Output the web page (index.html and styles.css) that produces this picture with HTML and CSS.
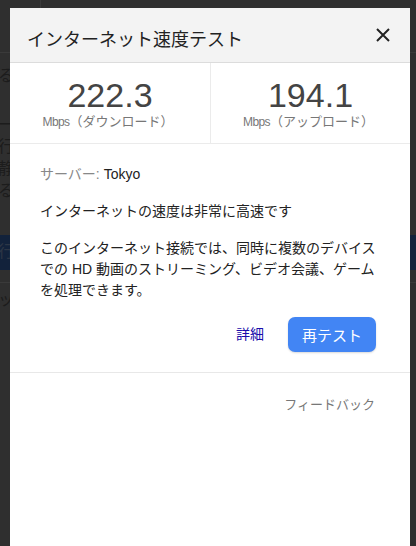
FILE: index.html
```
<!doctype html>

<html>
	<head>
		<meta charset="utf-8">
		<link rel="stylesheet" href="styles.css">
	</head>
	<body>
		<!-- the page behind the dialog, dimmed -->
		<div class="page">
			<div class="page-bar"><span class="page-tab"></span></div>
			<div class="page-line first">設定を確認する</div>
			<div class="page-block">
				<div class="page-line">サーバーー</div>
				<div class="page-line">テストを実行</div>
				<div class="page-line">接続が静</div>
				<div class="page-line">確認する</div>
			</div>
			<div class="page-button"><span class="page-line">テストを実行</span></div>
			<div class="page-rule"></div>
			<div class="page-line">フィードバッ</div>
		</div>

		<div class="overlay">
			<div class="dialog">
				<div class="dialog-head">
					<span class="dialog-title">インターネット速度テスト</span>
					<svg class="close" width="14" height="14" viewBox="0 0 14 14">
						<path d="M1 1L13 13M13 1L1 13" stroke="#222" stroke-width="2" fill="none"/>
					</svg>
				</div>

				<div class="stats">
					<div class="stat">
						<div class="stat-value">222.3</div>
						<div class="stat-label"><span class="unit">Mbps</span>（ダウンロード）</div>
					</div>
					<div class="stat">
						<div class="stat-value">194.1</div>
						<div class="stat-label"><span class="unit">Mbps</span>（アップロード）</div>
					</div>
				</div>

				<div class="result">
					<p class="server"><span class="muted">サーバー:</span> Tokyo</p>
					<p>インターネットの速度は非常に高速です</p>
					<p>このインターネット接続では、同時に複数のデバイスでの HD 動画のストリーミング、ビデオ会議、ゲームを処理できます。</p>
					<div class="actions">
						<a class="details" href="#">詳細</a>
						<button class="retest">再テスト</button>
					</div>
				</div>

				<div class="feedback">フィードバック</div>
			</div>
		</div>
	</body>
</html>
```

FILE: styles.css
```
body, html {
	margin: 0;
	padding: 0;
	height: 100%;
	overflow: hidden;
	background: #2f2f2f;
	font-family: "Liberation Sans", Arial, "Noto Sans CJK JP", sans-serif;
}

/* dimmed page */
.page {
	color: #1c1c1c;
	font-size: 16px;
}

.page-bar {
	height: 52px;
	border-bottom: 1px solid #3a3a3a;
}

.page-tab {
	display: block;
	width: 40px;
	height: 8px;
	border-right: 1px solid #3a3a3a;
}

.page-line {
	display: block;
	width: 14px;
	height: 22px;
	line-height: 22px;
	direction: rtl;
	white-space: nowrap;
	overflow: hidden;
}

.page-line.first {
	margin-top: 12px;
}

.page-block {
	margin-top: 27px;
}

.page-button {
	margin-top: 33px;
	height: 35px;
	padding-top: 6px;
	box-sizing: border-box;
	background: #12223b;
	color: #2c3646;
}

.page-rule {
	margin: 12px 0 6px;
	border-top: 1px solid #3a3a3a;
}

/* dialog */
.overlay {
	position: fixed;
	inset: 0;
	display: flex;
	padding: 8px 0 0 10px;
}

.dialog {
	width: 400px;
	background: #fff;
	display: flex;
	flex-direction: column;
}

.dialog-head {
	height: 55px;
	box-sizing: border-box;
	padding: 20px 20px 0 17px;
	background: #f3f3f3;
	border-bottom: 1px solid #dcdcdc;
	display: flex;
	align-items: flex-start;
	justify-content: space-between;
	flex-shrink: 0;
}

.dialog-title {
	font-size: 18px;
	line-height: 24px;
	color: #222;
}

.close {
	flex-shrink: 0;
}

.stats {
	display: grid;
	grid-template-columns: 200px 200px;
	border-bottom: 1px solid #ebebeb;
}

.stat {
	padding: 15px 0 14px;
	text-align: center;
}

.stat + .stat {
	border-left: 1px solid #ebebeb;
}

.stat-value {
	font-size: 34px;
	line-height: 34px;
	color: #444;
}

.stat-label {
	margin: 3px 4px 0 0;
	font-size: 13px;
	line-height: 13px;
	color: #777;
}

.unit {
	font-size: 12px;
	letter-spacing: -0.6px;
}

.result {
	padding: 20px 32px 20px 30px;
	font-size: 14px;
	line-height: 21px;
	color: #222;
}

.result p {
	margin: 0 0 16px;
}

.muted {
	color: #888;
}

.actions {
	display: flex;
	align-items: center;
	justify-content: flex-end;
	gap: 24px;
	margin-top: 16px;
	padding-right: 2px;
}

.details {
	color: #1a0dab;
	text-decoration: none;
}

.retest {
	width: 88px;
	height: 35px;
	border: none;
	border-radius: 7px;
	background: #4285f4;
	color: #fff;
	font-family: inherit;
	font-size: 15px;
	box-shadow: 0 1px 2px rgba(0, 0, 0, 0.15);
}

.feedback {
	border-top: 1px solid #e8e8e8;
	padding: 22px 35px 0 0;
	text-align: right;
	font-size: 13px;
	line-height: 20px;
	color: #777;
}
```
